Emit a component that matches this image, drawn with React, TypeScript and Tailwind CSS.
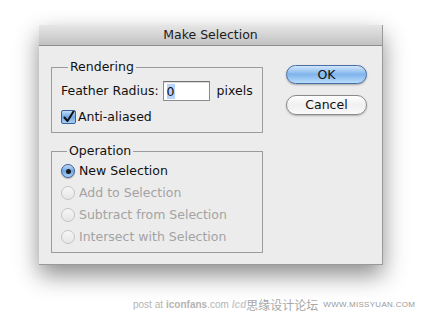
import React from 'react';

// Make Selection dialog, Mac OS X Aqua style

const font = { fontFamily: '"DejaVu Sans", "Noto Sans", sans-serif' };
const small = { fontFamily: '"Liberation Sans", Arial, sans-serif' };

const Radio: React.FC<{ checked?: boolean; disabled?: boolean; label: string }> = ({ checked, disabled, label }) => (
  <div className="flex items-center h-[16px]">
    {checked ? (
      <span className="w-[14px] h-[14px] rounded-full border border-[#3b5f95] bg-gradient-to-b from-[#c3dcf6] via-[#6fa6e6] to-[#a8d0f7] flex items-center justify-center shadow-[0_1px_1px_rgba(0,0,0,0.25)]">
        <span className="w-[5px] h-[5px] rounded-full bg-[#1a1a1a]" />
      </span>
    ) : (
      <span className="w-[14px] h-[14px] rounded-full border border-[#c4c4c4] bg-gradient-to-b from-[#f6f6f6] to-[#e6e6e6]" />
    )}
    <span className={`ml-[4px] text-[12.5px] leading-[16px] ${disabled ? 'text-[#a3a3a3]' : 'text-[#111]'}`}>{label}</span>
  </div>
);

export default function App() {
  return (
    <div className="w-[422px] h-[320px] bg-white pt-[25px] pl-[39px] overflow-hidden" style={font}>
      {/* Dialog */}
      <div className="w-[344px] h-[240px] bg-[#ececec] border-r border-b border-[#9a9a9a] shadow-[0_10px_22px_rgba(0,0,0,0.45)] flex flex-col">
        {/* Title bar */}
        <div className="h-[21px] bg-gradient-to-b from-[#e6e6e6] to-[#c2c2c2] border-b border-[#8f8f8f] flex items-center justify-center">
          <span className="text-[12.5px] leading-[16px] text-[#1c1c1c]">Make Selection</span>
        </div>

        {/* Body */}
        <div className="flex items-start pt-[13px] pl-[12px]">
          <div className="w-[212px] flex flex-col">
            <fieldset className="border border-[#9b9b9b] pl-[9px] pb-[7px]">
              <legend className="ml-[7px] px-[2px] text-[12.5px] leading-[16px] text-[#111]">Rendering</legend>
              <div className="flex items-center h-[20px] mt-[6px]">
                <span className="text-[12.5px] leading-[16px] text-[#111]">Feather Radius:</span>
                <div className="ml-[4px] w-[47px] h-[20px] bg-white border border-[#8c8c8c] border-t-[#6f6f6f] flex items-center pl-[3px] shadow-[inset_0_1px_1px_rgba(0,0,0,0.15)]">
                  <span className="text-[12.5px] leading-[15px] bg-[#b5d5ff] text-[#111]">0</span>
                </div>
                <span className="ml-[7px] text-[12.5px] leading-[16px] text-[#111]">pixels</span>
              </div>
              <div className="flex items-center h-[16px] mt-[8px]">
                <span className="w-[15px] h-[14px] rounded-[2px] border border-[#3b5f95] bg-gradient-to-b from-[#c3dcf6] via-[#6fa6e6] to-[#a8d0f7] flex items-center justify-center">
                  <svg width="13" height="13" viewBox="0 0 13 13">
                    <path d="M2.5 6.5 L5.5 10 L11.5 0.5" fill="none" stroke="#111" strokeWidth="2" strokeLinecap="round" strokeLinejoin="round" />
                  </svg>
                </span>
                <span className="ml-[2px] text-[12.5px] leading-[16px] text-[#111]">Anti-aliased</span>
              </div>
            </fieldset>

            <fieldset className="mt-[10px] border border-[#9b9b9b] pl-[9px] pb-[7px]">
              <legend className="ml-[6px] px-[2px] text-[12.5px] leading-[16px] text-[#111]">Operation</legend>
              <div className="flex flex-col gap-[6px] pt-[4px]">
                <Radio checked label="New Selection" />
                <Radio disabled label="Add to Selection" />
                <Radio disabled label="Subtract from Selection" />
                <Radio disabled label="Intersect with Selection" />
              </div>
            </fieldset>
          </div>

          {/* Buttons */}
          <div className="ml-[23px] mt-[6px] flex flex-col gap-[11px]">
            <button className="w-[81px] h-[19px] rounded-full border border-[#4a6ea6] bg-gradient-to-b from-[#d2e6fa] via-[#7fb4ec] to-[#b9dcfb] text-[12.5px] leading-[16px] text-[#111] shadow-[0_1px_2px_rgba(0,0,0,0.3)]" style={font}>
              OK
            </button>
            <button className="w-[81px] h-[20px] rounded-full border border-[#8a8a8a] bg-gradient-to-b from-[#ffffff] via-[#f0f0f0] to-[#fafafa] text-[12.5px] leading-[16px] text-[#111] shadow-[0_1px_2px_rgba(0,0,0,0.25)]" style={font}>
              Cancel
            </button>
          </div>
        </div>
      </div>

      {/* Watermark */}
      <div className="ml-[94px] mt-[32px] flex items-center h-[16px] text-[#b4b4b4] whitespace-nowrap" style={small}>
        <span className="text-[10px] leading-[16px]">post at</span>
        <span className="ml-[3px] text-[10px] leading-[16px] font-bold">iconfans</span>
        <span className="text-[10px] leading-[16px]">.com</span>
        <span className="ml-[3px] text-[10px] leading-[16px] italic font-bold text-[#cccccc]">lcd</span>
        <span className="text-[12px] leading-[16px] text-[#a8a8a8]" style={{ fontFamily: '"Noto Sans CJK SC", sans-serif' }}>思缘设计论坛</span>
        <span className="ml-[5px] text-[8px] leading-[16px] text-[#9a9a9a] tracking-[0.3px]">WWW.MISSYUAN.COM</span>
      </div>
    </div>
  );
}
